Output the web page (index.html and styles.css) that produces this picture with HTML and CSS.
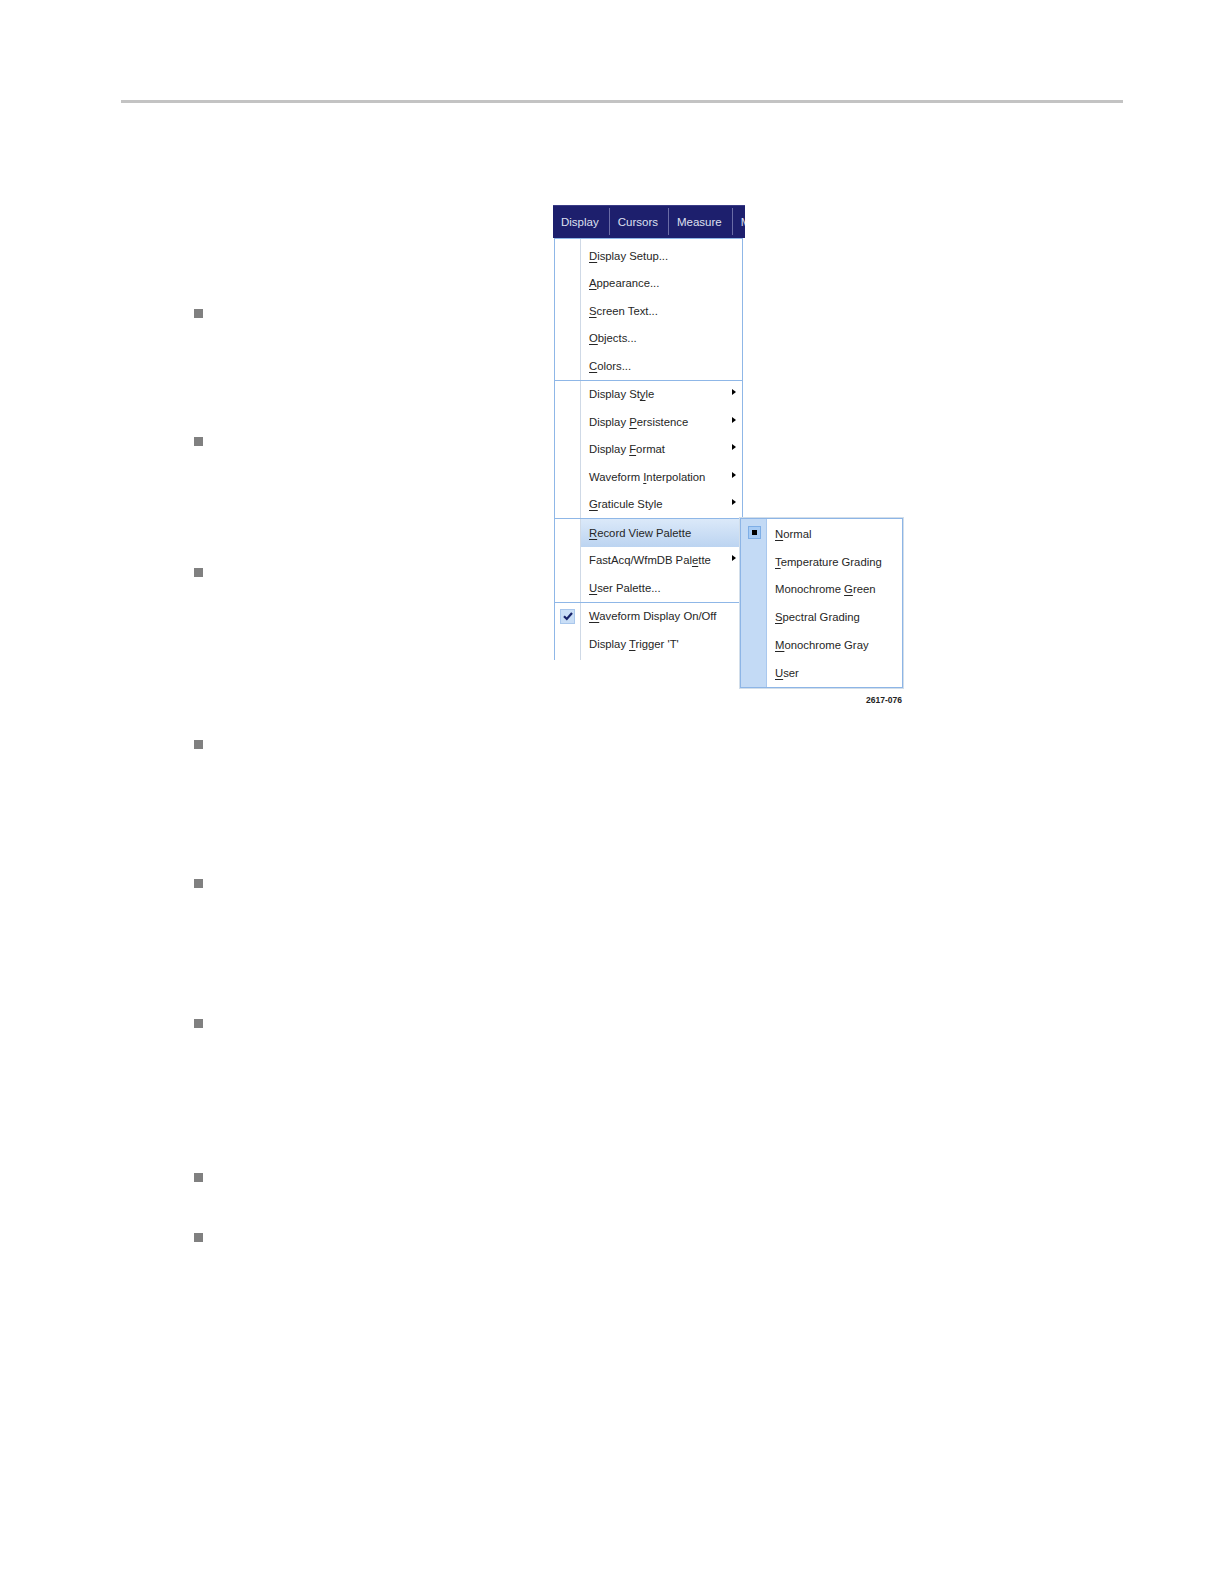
FILE: index.html
```html
<!DOCTYPE html>
<html>
<head>
<meta charset="utf-8">
<link rel="stylesheet" href="styles.css">
</head>
<body>
<div class="page">
  <div class="rule"></div>
  <section class="top">
    <div class="col-left">
      <ul class="bullets">
        <li class="b b1"></li>
        <li class="b b2"></li>
        <li class="b b3"></li>
      </ul>
    </div>
    <figure class="fig">
      <div class="bar">
        <div class="bar-item">Display</div>
        <div class="bar-item">Cursors</div>
        <div class="bar-item">Measure</div>
        <div class="bar-item last">M</div>
      </div>
      <div class="menu">
        <div class="grp">
          <div class="mi"><span class="ico"></span><span class="txt"><span class="lbl"><u>D</u>isplay Setup...</span></span></div>
          <div class="mi"><span class="ico"></span><span class="txt"><span class="lbl"><u>A</u>ppearance...</span></span></div>
          <div class="mi"><span class="ico"></span><span class="txt"><span class="lbl"><u>S</u>creen Text...</span></span></div>
          <div class="mi"><span class="ico"></span><span class="txt"><span class="lbl"><u>O</u>bjects...</span></span></div>
          <div class="mi"><span class="ico"></span><span class="txt"><span class="lbl"><u>C</u>olors...</span></span></div>
        </div>
        <div class="sep"></div>
        <div class="grp">
          <div class="mi"><span class="ico"></span><span class="txt"><span class="lbl">Display St<u>y</u>le</span><span class="arr"></span></span></div>
          <div class="mi"><span class="ico"></span><span class="txt"><span class="lbl">Display <u>P</u>ersistence</span><span class="arr"></span></span></div>
          <div class="mi"><span class="ico"></span><span class="txt"><span class="lbl">Display <u>F</u>ormat</span><span class="arr"></span></span></div>
          <div class="mi"><span class="ico"></span><span class="txt"><span class="lbl">Waveform <u>I</u>nterpolation</span><span class="arr"></span></span></div>
          <div class="mi"><span class="ico"></span><span class="txt"><span class="lbl"><u>G</u>raticule Style</span><span class="arr"></span></span></div>
        </div>
        <div class="sep"></div>
        <div class="grp">
          <div class="mi hl"><span class="ico"></span><span class="txt"><span class="lbl"><u>R</u>ecord View Palette</span></span></div>
          <div class="mi"><span class="ico"></span><span class="txt"><span class="lbl">FastAcq/WfmDB Pal<u>e</u>tte</span><span class="arr"></span></span></div>
          <div class="mi"><span class="ico"></span><span class="txt"><span class="lbl"><u>U</u>ser Palette...</span></span></div>
        </div>
        <div class="sep"></div>
        <div class="grp">
          <div class="mi"><span class="ico"><span class="check"><svg width="12" height="12" viewBox="0 0 12 12"><path d="M2 6.2 L4.8 9 L10 3" fill="none" stroke="#17236a" stroke-width="2.2"/></svg></span></span><span class="txt"><span class="lbl"><u>W</u>aveform Display On/Off</span></span></div>
          <div class="mi"><span class="ico"></span><span class="txt"><span class="lbl">Display <u>T</u>rigger 'T'</span></span></div>
        </div>
      </div>
      <div class="submenu">
        <div class="si"><span class="sico"><span class="radio"><span class="dot"></span></span></span><span class="stxt"><u>N</u>ormal</span></div>
        <div class="si"><span class="sico"></span><span class="stxt"><u>T</u>emperature Grading</span></div>
        <div class="si"><span class="sico"></span><span class="stxt">Monochrome <u>G</u>reen</span></div>
        <div class="si"><span class="sico"></span><span class="stxt"><u>S</u>pectral Grading</span></div>
        <div class="si"><span class="sico"></span><span class="stxt"><u>M</u>onochrome Gray</span></div>
        <div class="si"><span class="sico"></span><span class="stxt"><u>U</u>ser</span></div>
      </div>
      <figcaption class="cap">2617-076</figcaption>
    </figure>
  </section>
  <ul class="bullets rest">
    <li class="b b4"></li>
    <li class="b b5"></li>
    <li class="b b6"></li>
    <li class="b b7"></li>
    <li class="b b8"></li>
  </ul>
</div>
</body>
</html>
```

FILE: styles.css
```css
html, body {
  margin: 0;
  padding: 0;
  background: #ffffff;
}
body {
  font-family: "Liberation Sans", Arial, sans-serif;
  color: #1e1e1e;
  overflow: hidden;
}
.page {
  padding-top: 100px;
}
.rule {
  margin-left: 121px;
  width: 1002px;
  height: 3px;
  background: #c3c3c3;
}
.top {
  display: flex;
  margin-top: 102px;
}
.col-left {
  flex: none;
  width: 553px;
  padding-left: 194px;
  box-sizing: border-box;
}
.bullets {
  list-style: none;
  margin: 0;
  padding: 0;
}
.b {
  width: 9px;
  height: 9px;
  background: #808080;
}
.b1 { margin-top: 104px; }
.b2 { margin-top: 119px; }
.b3 { margin-top: 122px; }
.rest { padding-left: 194px; }
.b4 { margin-top: 35px; }
.b5 { margin-top: 130px; }
.b6 { margin-top: 131px; }
.b7 { margin-top: 145px; }
.b8 { margin-top: 51px; }

.fig {
  position: relative;
  flex: none;
  margin: 0;
  width: 350px;
}
.bar {
  display: flex;
  width: 192px;
  height: 33px;
  background: #1d1f6d;
  overflow: hidden;
  box-shadow: inset 0 1px 0 #3a3c86;
}
.bar-item {
  flex: none;
  display: flex;
  align-items: center;
  padding: 0 10px 0 8px;
  font-size: 11.5px;
  color: #dfe0f0;
  border-right: 1px solid #6a6ca6;
  margin: 3px 0;
  white-space: nowrap;
}
.bar-item.last { border-right: none; padding-right: 0; }

.menu {
  margin-left: 1px;
  width: 189px;
  height: 422px;
  box-sizing: border-box;
  border: 1px solid #8fb7e7;
  border-bottom: none;
  padding-top: 3px;
  background: linear-gradient(to right, #ffffff 25px, #cfd9e6 25px, #cfd9e6 26px, #ffffff 26px);
  font-size: 11.3px;
}
.grp { display: flex; flex-direction: column; }
.mi {
  display: flex;
  height: 27.5px;
}
.ico {
  flex: none;
  width: 26px;
  display: flex;
  align-items: center;
  justify-content: center;
}
.txt {
  flex: 1;
  display: flex;
  align-items: center;
  justify-content: space-between;
  padding: 0 6px 0 8px;
  color: #262626;
  white-space: nowrap;
}
.mi.hl .txt {
  background: linear-gradient(#dbe9f9, #bcd4f1);
}
.lbl u { text-decoration-thickness: 1px; text-underline-offset: 2px; }
.arr {
  width: 0;
  height: 0;
  border-top: 3.5px solid transparent;
  border-bottom: 3.5px solid transparent;
  border-left: 4px solid #000;
  margin-top: -4px;
}
.sep {
  height: 1px;
  background: #8fb7e7;
}
.check {
  width: 13px;
  height: 13px;
  margin-left: -1px;
  background: #c9def6;
  border: 1px solid #a9c7ec;
  display: flex;
  align-items: center;
  justify-content: center;
}

.submenu {
  position: absolute;
  left: 187px;
  top: 313px;
  width: 163px;
  height: 170px;
  box-sizing: border-box;
  border: 1px solid #8db5e6;
  box-shadow: 0 0 0 1px #d2deea;
  padding-top: 1px;
  background: linear-gradient(to right, #c3daf5 25px, #a9c8ee 25px, #a9c8ee 26px, #ffffff 26px);
  font-size: 11.3px;
}
.si {
  display: flex;
  height: 27.8px;
  align-items: center;
}
.sico {
  flex: none;
  width: 26px;
  height: 100%;
  display: flex;
  align-items: center;
  justify-content: center;
}
.stxt {
  padding-left: 8px;
  color: #262626;
  white-space: nowrap;
}
.stxt u { text-decoration-thickness: 1px; text-underline-offset: 2px; }
.radio {
  width: 11px;
  height: 11px;
  margin-top: -2px;
  background: #a7cbf4;
  border: 1px solid #7eaee6;
  display: flex;
  align-items: center;
  justify-content: center;
}
.dot {
  width: 5px;
  height: 5px;
  background: #000;
}
.cap {
  margin-top: 35px;
  text-align: right;
  padding-right: 1px;
  font-size: 8.5px;
  font-weight: bold;
  line-height: 10px;
  color: #222;
}
```
